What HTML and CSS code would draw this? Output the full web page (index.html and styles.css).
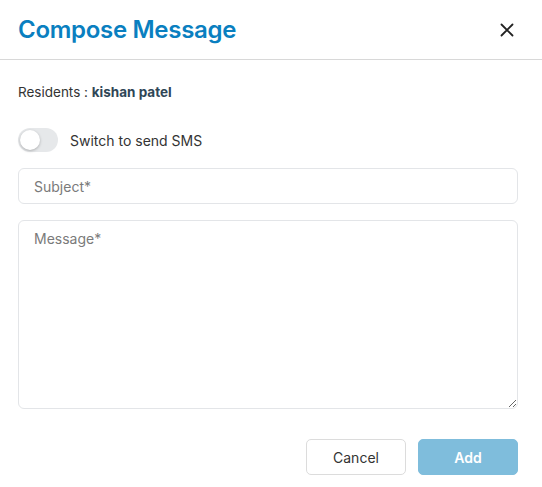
FILE: index.html
```html
<!DOCTYPE html>
<html>
<head>
<meta charset="utf-8">
<link rel="stylesheet" href="styles.css">
</head>
<body>
<div class="modal">
  <div class="header">
    <h1 class="title">Compose Message</h1>
    <button class="close" aria-label="Close">
      <svg width="14" height="14" viewBox="0 0 14 14"><path d="M1.5 1.5 L12.5 12.5 M12.5 1.5 L1.5 12.5" stroke="#222" stroke-width="1.8" stroke-linecap="round"/></svg>
    </button>
  </div>
  <div class="body">
    <div class="residents">Residents : <strong>kishan patel</strong></div>
    <label class="switch-row">
      <span class="switch"><span class="knob"></span></span>
      <span class="switch-label">Switch to send SMS</span>
    </label>
    <input class="field" type="text" placeholder="Subject*">
    <textarea class="field area" placeholder="Message*"></textarea>
    <div class="actions">
      <button class="btn cancel">Cancel</button>
      <button class="btn add">Add</button>
    </div>
  </div>
</div>
</body>
</html>
```
FILE: styles.css
```css
* { box-sizing: border-box; }
html, body { margin: 0; padding: 0; background: #fff; }
body { font-family: Inter, "Noto Sans", sans-serif; color: #333; }
.modal { width: 542px; height: 487px; }
.header {
  height: 60px;
  display: flex;
  align-items: center;
  justify-content: space-between;
  padding: 0 28px 0 18px;
  border-bottom: 1px solid #d8d8d8;
}
.title {
  margin: 0;
  font-family: Inter, sans-serif;
  font-size: 24px;
  font-weight: 600;
  color: #0a7fc0;
  letter-spacing: -0.3px;
}
.close { border: 0; background: none; padding: 0; display: flex; cursor: pointer; }
.body { padding: 24px 24px 0 18px; display: flex; flex-direction: column; }
.residents { font-size: 13.5px; color: #333; line-height: 16px; }
.residents strong { color: #2f4656; font-weight: 700; }
.switch-row { display: flex; align-items: center; gap: 12px; margin-top: 28px; height: 24px; }
.switch {
  width: 40px; height: 24px; border-radius: 12px; background: #e6e8ea;
  position: relative; display: block;
}
.knob {
  position: absolute; left: 2px; top: 2px; width: 20px; height: 20px; border-radius: 50%;
  background: #fff; box-shadow: 0 1px 3px rgba(0,0,0,0.25);
}
.switch-label { font-size: 14px; color: #333; }
.field {
  width: 100%;
  border: 1px solid #e3e5e8;
  border-radius: 6px;
  font-family: Inter, sans-serif;
  font-size: 14px;
  color: #333;
  padding: 8px 15px;
  outline: none;
}
.field::placeholder { color: #7a7a7a; }
input.field { height: 36px; margin-top: 16px; }
.area { height: 189px; margin-top: 16px; resize: vertical; display: block; padding-top: 9px; }
.actions { display: flex; justify-content: flex-end; gap: 12px; margin-top: 30px; }
.btn {
  width: 100px; height: 36px; border-radius: 5px; font-family: Inter, sans-serif; font-size: 14px;
}
.cancel { background: #fff; border: 1px solid #dcdcdc; color: #333; }
.add { background: #7fbddc; border: 1px solid #7fbddc; color: #fff; font-weight: 600; }
```
